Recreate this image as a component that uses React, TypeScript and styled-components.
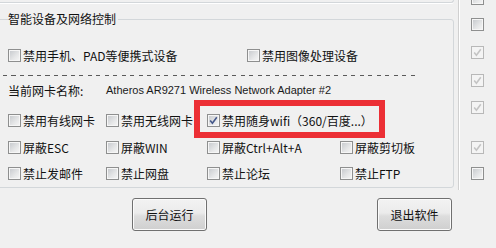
import { FC } from "react"
import styled, { createGlobalStyle } from "styled-components"

const GlobalStyle = createGlobalStyle`
  html, body {
    margin: 0;
    background: #f0f0f0;
  }
  body {
    font-family: "Noto Sans CJK SC", "Microsoft YaHei", sans-serif;
    font-size: 12px;
    color: #111;
  }
`

const Page = styled.div`
  position: relative;
  width: 496px;
  height: 248px;
  overflow: hidden;
`

const Top = styled.div`
  display: flex;
  height: 190px;
`

const LeftPane = styled.div`
  width: 458px;
  flex: none;
`

const PrevGroupEdge = styled.div`
  height: 3px;
  width: 460px;
  box-sizing: border-box;
  margin-left: -6px;
  border: 1px solid #d3d7da;
  border-top: none;
  border-radius: 0 0 3px 3px;
  box-shadow: 0 1px 0 #fff;
`

const GroupBox = styled.fieldset`
  margin: 8px 0 0 -6px;
  padding: 0 0 4px 13px;
  width: 460px;
  min-width: 0;
  box-sizing: border-box;
  border: 1px solid #d3d7da;
  border-radius: 3px;
`

const Legend = styled.legend`
  padding: 0 2px 0 0;
  line-height: 16px;
  font-size: 12px;
`

const Row = styled.div<{ $top: number }>`
  margin-top: ${(p) => p.$top}px;
  height: 20px;
  display: flex;
  align-items: center;
`

const Grid = styled.div<{ $top: number; $cols: string }>`
  margin-top: ${(p) => p.$top}px;
  height: 20px;
  display: grid;
  grid-template-columns: ${(p) => p.$cols};
  align-items: center;
`

const Dashed = styled.div`
  margin: 10px 0 0 -5px;
  width: 416px;
  height: 1px;
  background: repeating-linear-gradient(
    90deg,
    #5a5a5a 0 4px,
    transparent 4px 8.5px
  );
`

const NameLabel = styled.span`
  width: 98px;
  flex: none;
`

const AdapterName = styled.span`
  font-family: "Liberation Sans", Arial, sans-serif;
  font-size: 11px;
  color: #1a1a1a;
`

const Item = styled.label`
  display: flex;
  align-items: center;
  gap: 2px;
  white-space: nowrap;
`

const Box = styled.span<{ $disabled?: boolean }>`
  width: 13px;
  height: 13px;
  box-sizing: border-box;
  flex: none;
  display: inline-flex;
  align-items: center;
  justify-content: center;
  border: 1px solid ${(p) => (p.$disabled ? "#b8b8b8" : "#8e8f8f")};
  background: ${(p) =>
    p.$disabled
      ? "#f4f4f4"
      : "linear-gradient(135deg, #c4c7cb 0%, #e6e7e8 60%, #f7f7f7 100%)"};
  box-shadow: inset 0 0 0 1px ${(p) => (p.$disabled ? "#f4f4f4" : "#f6f6f6")};
`

const Separator = styled.div`
  width: 2px;
  flex: none;
  border-left: 1px solid #d0d0d0;
  background: #fff;
  box-sizing: border-box;
`

const RightCol = styled.div`
  display: flex;
  flex-direction: column;
  padding-left: 11px;
`

const RightBox = styled.div<{ $top: number }>`
  margin-top: ${(p) => p.$top}px;
  display: flex;
`

const Footer = styled.div`
  display: flex;
  justify-content: space-between;
  padding: 8px 44px 0 132px;
`

const Button = styled.button`
  width: 75px;
  height: 33px;
  border: 1px solid #707070;
  border-radius: 3px;
  background: linear-gradient(
    #f2f2f2 0%,
    #ebebeb 45%,
    #dddddd 55%,
    #cfcfcf 100%
  );
  box-shadow: inset 0 0 0 1px #fbfbfb;
  font-family: "Noto Sans CJK SC", "Microsoft YaHei", sans-serif;
  font-size: 12px;
  color: #111;
  padding: 0;
`

const Highlight = styled.div`
  position: absolute;
  left: 194px;
  top: 100px;
  width: 191px;
  height: 38px;
  box-sizing: border-box;
  border: 6px solid #ec2f35;
  pointer-events: none;
`

const CheckBox: FC<{ checked?: boolean; disabled?: boolean }> = ({
  checked,
  disabled,
}) => (
  <Box $disabled={disabled}>
    {checked && (
      <svg width="9" height="9" viewBox="0 0 9 9">
        <path
          d="M1.2 4.6 L3.4 7.2 L7.8 1.2"
          fill="none"
          stroke={disabled ? "#c4c4c4" : "#44578a"}
          strokeWidth="1.6"
        />
      </svg>
    )}
  </Box>
)

const Check: FC<{ text: string; checked?: boolean }> = ({ text, checked }) => (
  <Item>
    <CheckBox checked={checked} />
    <span>{text}</span>
  </Item>
)

const COLS = "98px 101px 133px auto"

const rightBoxes = [
  { top: -8, checked: false },
  { top: 13, checked: false },
  { top: 15, checked: true },
  { top: 15, checked: true },
  { top: 14, checked: true },
  { top: 27, checked: true },
  { top: 13, checked: false },
]

export default function App() {
  return (
    <Page>
      <GlobalStyle />
      <Top>
        <LeftPane>
          <PrevGroupEdge />
          <GroupBox>
            <Legend>智能设备及网络控制</Legend>
            <Grid $top={18} $cols="239px auto">
              <Check text="禁用手机、PAD等便携式设备" />
              <Check text="禁用图像处理设备" />
            </Grid>
            <Dashed />
            <Row $top={4}>
              <NameLabel>当前网卡名称:</NameLabel>
              <AdapterName>Atheros AR9271 Wireless Network Adapter #2</AdapterName>
            </Row>
            <Grid $top={10} $cols={COLS}>
              <Check text="禁用有线网卡" />
              <Check text="禁用无线网卡" />
              <Check text="禁用随身wifi（360/百度...）" checked />
            </Grid>
            <Grid $top={7} $cols={COLS}>
              <Check text="屏蔽ESC" />
              <Check text="屏蔽WIN" />
              <Check text="屏蔽Ctrl+Alt+A" />
              <Check text="屏蔽剪切板" />
            </Grid>
            <Grid $top={6} $cols={COLS}>
              <Check text="禁止发邮件" />
              <Check text="禁止网盘" />
              <Check text="禁止论坛" />
              <Check text="禁止FTP" />
            </Grid>
          </GroupBox>
        </LeftPane>
        <Separator />
        <RightCol>
          {rightBoxes.map((b, i) => (
            <RightBox key={i} $top={b.top}>
              <CheckBox checked={b.checked} disabled={b.checked} />
            </RightBox>
          ))}
        </RightCol>
      </Top>
      <Footer>
        <Button>后台运行</Button>
        <Button>退出软件</Button>
      </Footer>
      <Highlight />
    </Page>
  )
}
